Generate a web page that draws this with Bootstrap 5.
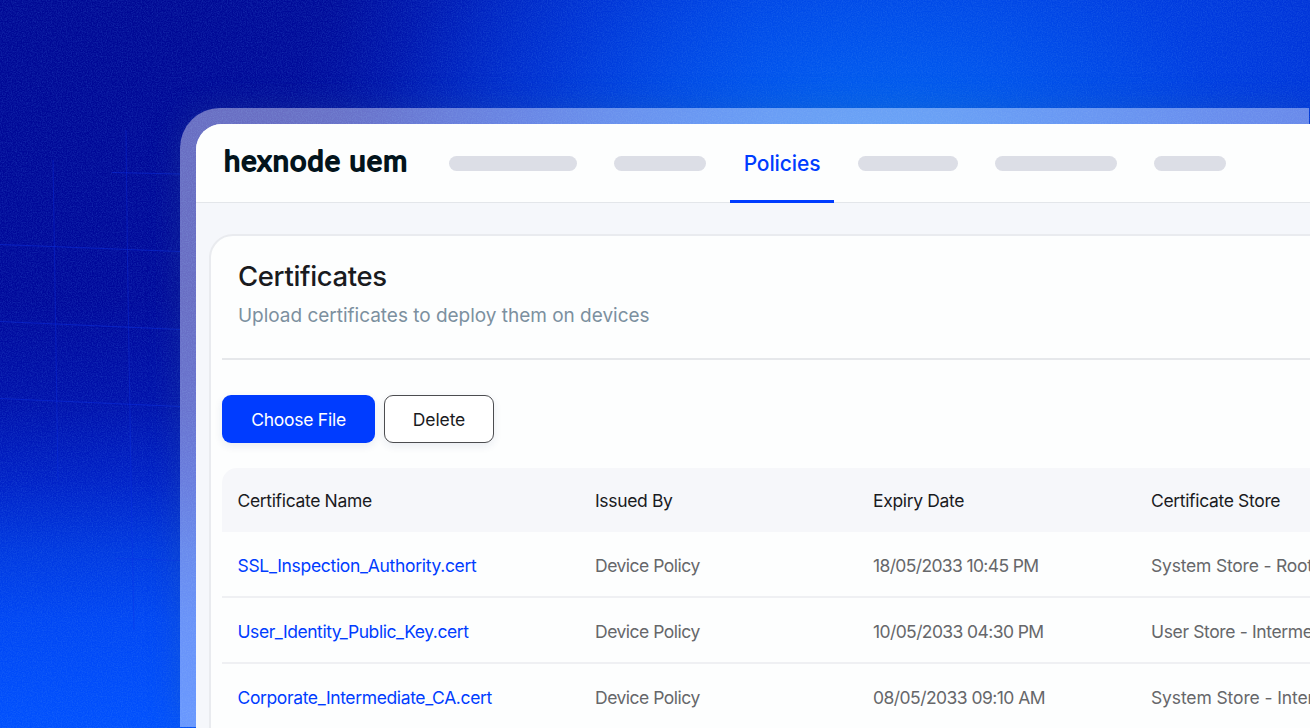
<!DOCTYPE html>
<html lang="en">
<head>
<meta charset="utf-8">
<meta name="viewport" content="width=device-width, initial-scale=1">
<title>Hexnode UEM – Certificates</title>
<link href="https://cdn.jsdelivr.net/npm/bootstrap@5.3.0/dist/css/bootstrap.min.css" rel="stylesheet">
<style>
  :root { --brand:#003cff; --ink:#1a1b1e; --soft:#66676a; --hair:#e9ebef; }
  body {
    height:728px; font-family:Inter,"Liberation Sans",sans-serif; color:var(--ink);
    background:
      radial-gradient(ellipse 600px 420px at 880px 170px, #0068f2 0%, rgba(0,88,240,.85) 30%, rgba(0,70,235,.5) 60%, rgba(0,50,220,.14) 85%, rgba(0,40,215,0) 100%),
      linear-gradient(90deg, rgba(0,48,222,0) 180px, rgba(0,48,222,.08) 340px, rgba(0,48,222,.45) 500px, #0034d8 760px, #0032d6 1310px) 0 0/100% 124px no-repeat,
      linear-gradient(180deg, #000894 0, #00089a 300px, #0010aa 400px, #0020c6 480px, #0038e0 550px, #0046f4 620px, #0050fe 728px);
  }
  .backdrop { inset:0; width:1310px; height:728px; }
  .frame {
    margin:108px 0 0 180px; height:619px; width:1129px; padding:16px 0 0 16px;
    background:rgba(255,255,255,.41); border-radius:40px 0 0 0;
    box-shadow:0 0 34px rgba(60,110,140,.24);
  }
  .app { height:604px; width:1114px; background:#f5f7fb; border-radius:26px 0 0 0; }
  .topbar { height:79px; background:#fdfefe; border-bottom:1px solid #e3e6ea; padding-left:27px; }
  .logo { width:226px; }
  .logo svg { display:block; overflow:visible; }
  .logo text { font-family:Lato,sans-serif; font-size:29px; fill:#03141c; stroke:#03141c; stroke-width:1.8px; stroke-linejoin:round; stroke-linecap:round; }
  .pill { height:15px; background:#dcdee6; border-radius:8px; }
  .tab { width:104px; height:79px; border-bottom:3px solid var(--brand); color:var(--brand); font-weight:500; font-size:21px; letter-spacing:-.12px; margin:0 24px; padding:4px 0 0; }
  .panel { margin:31px 0 0 13px; width:1160px; height:560px; background:#fdfefe; border:2px solid var(--hair); border-radius:24px; padding:0 0 0 11px; }
  .panel-head { height:124px; border-bottom:2px solid #e6e8eb; padding:22px 0 0 16px; }
  h1 { font-size:27.5px; font-weight:500; line-height:36px; margin:0; letter-spacing:-.35px; }
  .sub { font-size:19px; line-height:28px; color:#7c909f; margin:8px 0 0; letter-spacing:-.02px; }
  .actions { gap:9px; margin:35px 0 25px; }
  .act { height:48px; border-radius:9px; font-size:17.5px; padding:3px 0 0; box-shadow:0 3px 8px rgba(30,50,110,.09); }
  .act-main, .act-main:hover { width:153px; background:var(--brand); color:#fff; border:0; letter-spacing:-.25px; }
  .act-alt { width:110px; background:#fff; color:var(--ink); border:1px solid #4c4d50; letter-spacing:-.12px; }
  .grid-row { display:grid; grid-template-columns:357.5px 278px 278px 300px; height:66px; align-items:center; padding:5px 0 0 15.5px; font-size:17.5px; color:var(--soft); border-bottom:2px solid #eff0f3; white-space:nowrap; letter-spacing:-.5px; }
  .grid-head { height:64px; background:#f6f7fa; color:var(--ink); border:0; border-radius:15px 0 0 0; letter-spacing:-.34px; padding-top:3px; }
  .grid-row a { color:var(--brand); text-decoration:none; letter-spacing:-.37px; }
  .stamp { letter-spacing:-.54px; }
  .store { letter-spacing:-.2px; }
</style>
</head>
<body class="overflow-hidden position-relative">
<svg class="backdrop position-absolute" viewBox="0 0 1310 728" aria-hidden="true">
  <filter id="grain"><feTurbulence type="fractalNoise" baseFrequency=".8" numOctaves="2" seed="4"/><feColorMatrix values="0 0 0 0 .1  0 0 0 0 .35  0 0 0 0 .9  1.1 0 0 0 -.38"/></filter>
  <rect width="1310" height="728" filter="url(#grain)" opacity=".35"/>
  <g fill="none" stroke="#0a30e8" stroke-opacity=".45" stroke-width="1">
    <path d="M112 172.5L180 174M0 244.500L180 251.500M0 321.500L180 329.500M0 398.500L180 406.500" />
    <path d="M53 160L58 480M126 130L127.500 260L131 480L134 630M115 558.500L180 560.500" stroke-opacity=".38"/>
  </g>
</svg>
<div class="frame position-relative">
  <div class="app overflow-hidden">
    <header class="topbar d-flex align-items-center">
      <div class="logo"><svg width="190" height="30" role="img"><text x="1" y="22.500" textLength="183" lengthAdjust="spacing">hexnode uem</text></svg></div>
      <span class="pill" style="width:128px"></span>
      <span class="pill" style="width:92px;margin-left:37px"></span>
      <a class="tab d-flex align-items-center justify-content-center text-decoration-none" href="#">Policies</a>
      <span class="pill" style="width:100px"></span>
      <span class="pill" style="width:122px;margin-left:37px"></span>
      <span class="pill" style="width:72px;margin-left:37px"></span>
    </header>
    <main class="panel">
      <div class="panel-head">
        <h1>Certificates</h1>
        <p class="sub">Upload certificates to deploy them on devices</p>
      </div>
      <div class="actions d-flex">
        <button class="btn act act-main">Choose File</button>
        <button class="btn act act-alt">Delete</button>
      </div>
      <div class="grid-row grid-head"><span>Certificate Name</span><span>Issued By</span><span>Expiry Date</span><span>Certificate Store</span></div>
      <div class="grid-row"><a href="#" style="letter-spacing:-.31px">SSL_Inspection_Authority.cert</a><span>Device Policy</span><span class="stamp" style="letter-spacing:-.64px">18/05/2033 10:45 PM</span><span class="store">System Store - Root</span></div>
      <div class="grid-row"><a href="#" style="letter-spacing:-.44px">User_Identity_Public_Key.cert</a><span>Device Policy</span><span class="stamp" style="letter-spacing:-.6px">10/05/2033 04:30 PM</span><span class="store" style="letter-spacing:-.36px">User Store - Interme</span></div>
      <div class="grid-row"><a href="#">Corporate_Intermediate_CA.cert</a><span>Device Policy</span><span class="stamp">08/05/2033 09:10 AM</span><span class="store" style="letter-spacing:-.12px">System Store - Inter</span></div>
    </main>
  </div>
</div>
<script src="https://cdn.jsdelivr.net/npm/bootstrap@5.3.0/dist/js/bootstrap.bundle.min.js"></script>
</body>
</html>
